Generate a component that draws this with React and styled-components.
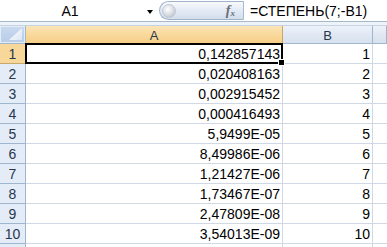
import React from "react";
import styled, { createGlobalStyle } from "styled-components";

const GlobalStyle = createGlobalStyle`
  html, body {
    margin: 0;
    padding: 0;
    background: #fff;
    overflow: hidden;
  }
  body {
    font-family: "Liberation Sans", Arial, sans-serif;
  }
`;

const values = [
  "0,142857143",
  "0,020408163",
  "0,002915452",
  "0,000416493",
  "5,9499E-05",
  "8,49986E-06",
  "1,21427E-06",
  "1,73467E-07",
  "2,47809E-08",
  "3,54013E-09",
];

const App = () => {
  return (
    <Page>
      <GlobalStyle />
      <FormulaBar>
        <NameBox>
          <NameText>A1</NameText>
          <DropArrow />
        </NameBox>
        <Pill>
          <Knob />
          <FxLabel>
            f<sub>x</sub>
          </FxLabel>
        </Pill>
        <FormulaInput>=СТЕПЕНЬ(7;-B1)</FormulaInput>
      </FormulaBar>
      <Strip />
      <Sheet>
        <Corner>
          <CornerTriangle />
        </Corner>
        <ColHeader $selected>A</ColHeader>
        <ColHeader>B</ColHeader>
        <ColHeader $last />
        {values.map((v, i) => (
          <React.Fragment key={i}>
            <RowHeader $selected={i === 0}>{i + 1}</RowHeader>
            <Cell $active={i === 0}>
              {v}
              {i === 0 && <FillHandle />}
            </Cell>
            <Cell>{i + 1}</Cell>
            <Cell $last />
          </React.Fragment>
        ))}
        <RowHeader />
        <Cell />
        <Cell />
        <Cell $last />
      </Sheet>
    </Page>
  );
};

export default App;

const Page = styled.div`
  width: 387px;
  height: 247px;
  overflow: hidden;
  background: #fff;
  color: #000;
`;

const FormulaBar = styled.div`
  display: flex;
  height: 21px;
  background: #fff;
`;

const NameBox = styled.div`
  width: 159px;
  display: flex;
  align-items: center;
  position: relative;
`;

const NameText = styled.span`
  width: 140px;
  text-align: center;
  font-size: 14px;
  color: #000;
`;

const DropArrow = styled.span`
  position: absolute;
  left: 147px;
  top: 10px;
  width: 0;
  height: 0;
  border-left: 3.5px solid transparent;
  border-right: 3.5px solid transparent;
  border-top: 4px solid #000;
`;

const Pill = styled.div`
  width: 85px;
  height: 19px;
  margin-top: 1px;
  display: flex;
  align-items: center;
  justify-content: space-between;
  box-sizing: border-box;
  padding: 0 8px 0 2px;
  border-radius: 10px 0 0 10px;
  background: linear-gradient(#f8fafd, #e3eaf4 50%, #d3deec);
  border: 1px solid #9fb3cd;
  border-right: 1px solid #a9b9cf;
`;

const Knob = styled.span`
  width: 12px;
  height: 12px;
  border-radius: 50%;
  background: radial-gradient(circle at 40% 35%, #ffffff, #d3d7dd 60%, #a9b0ba);
  border: 1px solid #c2c9d3;
`;

const FxLabel = styled.span`
  font-family: "Liberation Serif", "Times New Roman", serif;
  font-style: italic;
  font-weight: bold;
  font-size: 14px;
  color: #6a6f78;
  sub {
    font-size: 9px;
    vertical-align: -1px;
  }
`;

const FormulaInput = styled.div`
  flex: 1;
  display: flex;
  align-items: center;
  padding-left: 6px;
  font-size: 14px;
  color: #000;
`;

const Strip = styled.div`
  height: 3px;
  background: #eef3f9;
  border-top: 1px solid #a7b8cd;
  border-bottom: 1px solid #c6d3e3;
`;

const Sheet = styled.div`
  display: grid;
  grid-template-columns: 26px 257px 90px 1fr;
  grid-template-rows: 18px repeat(11, 20px);
`;

const headerBase = `
  box-sizing: border-box;
  display: flex;
  align-items: center;
  justify-content: center;
  font-size: 13px;
  color: #27374d;
  border-right: 1px solid #9eb6ce;
  border-bottom: 1px solid #9eb6ce;
`;

const Corner = styled.div`
  ${headerBase};
  position: relative;
  background: #e4ecf7;
  padding: 1px;
  &::before {
    content: "";
    position: absolute;
    inset: 1px;
    background: linear-gradient(#c9d9ef, #b9cde8);
  }
`;

const CornerTriangle = styled.span`
  position: absolute;
  right: 3px;
  bottom: 3px;
  width: 13px;
  height: 12px;
  clip-path: polygon(100% 0, 100% 100%, 0 100%);
  background: linear-gradient(135deg, #ffffff, #dbe6f4);
  z-index: 1;
`;

const ColHeader = styled.div`
  ${headerBase};
  padding-top: 1px;
  background: ${(p) =>
    p.$selected
      ? "linear-gradient(#fbe4b6, #f9d99c 50%, #f6cf86)"
      : "linear-gradient(#eef3fa, #e1e8f3 50%, #d8e1ee)"};
  border-bottom-color: ${(p) => (p.$selected ? "#f2b64b" : "#9eb6ce")};
  border-right-color: ${(p) => (p.$selected ? "#c9a769" : "#9eb6ce")};
`;

const RowHeader = styled.div`
  ${headerBase};
  background: ${(p) => (p.$selected ? "#f8d89a" : "#e4ecf7")};
  border-right-color: ${(p) => (p.$selected ? "#f2b64b" : "#9eb6ce")};
  border-bottom-color: ${(p) => (p.$selected ? "#c9a769" : "#9eb6ce")};
  font-size: 14px;
`;

const Cell = styled.div`
  box-sizing: border-box;
  position: relative;
  display: flex;
  align-items: center;
  justify-content: flex-end;
  padding-right: 2px;
  font-size: 14px;
  color: #000;
  border-right: ${(p) => (p.$last ? "none" : "1px solid #d0d7e5")};
  border-bottom: 1px solid #d0d7e5;
  ${(p) =>
    p.$active &&
    `
    border: 2px solid #000;
    margin: -1px 0 0 -1px;
    padding-right: 1px;
    z-index: 1;
  `}
`;

const FillHandle = styled.span`
  position: absolute;
  right: -4px;
  bottom: -4px;
  width: 5px;
  height: 5px;
  background: #000;
  border: 1px solid #fff;
`;
